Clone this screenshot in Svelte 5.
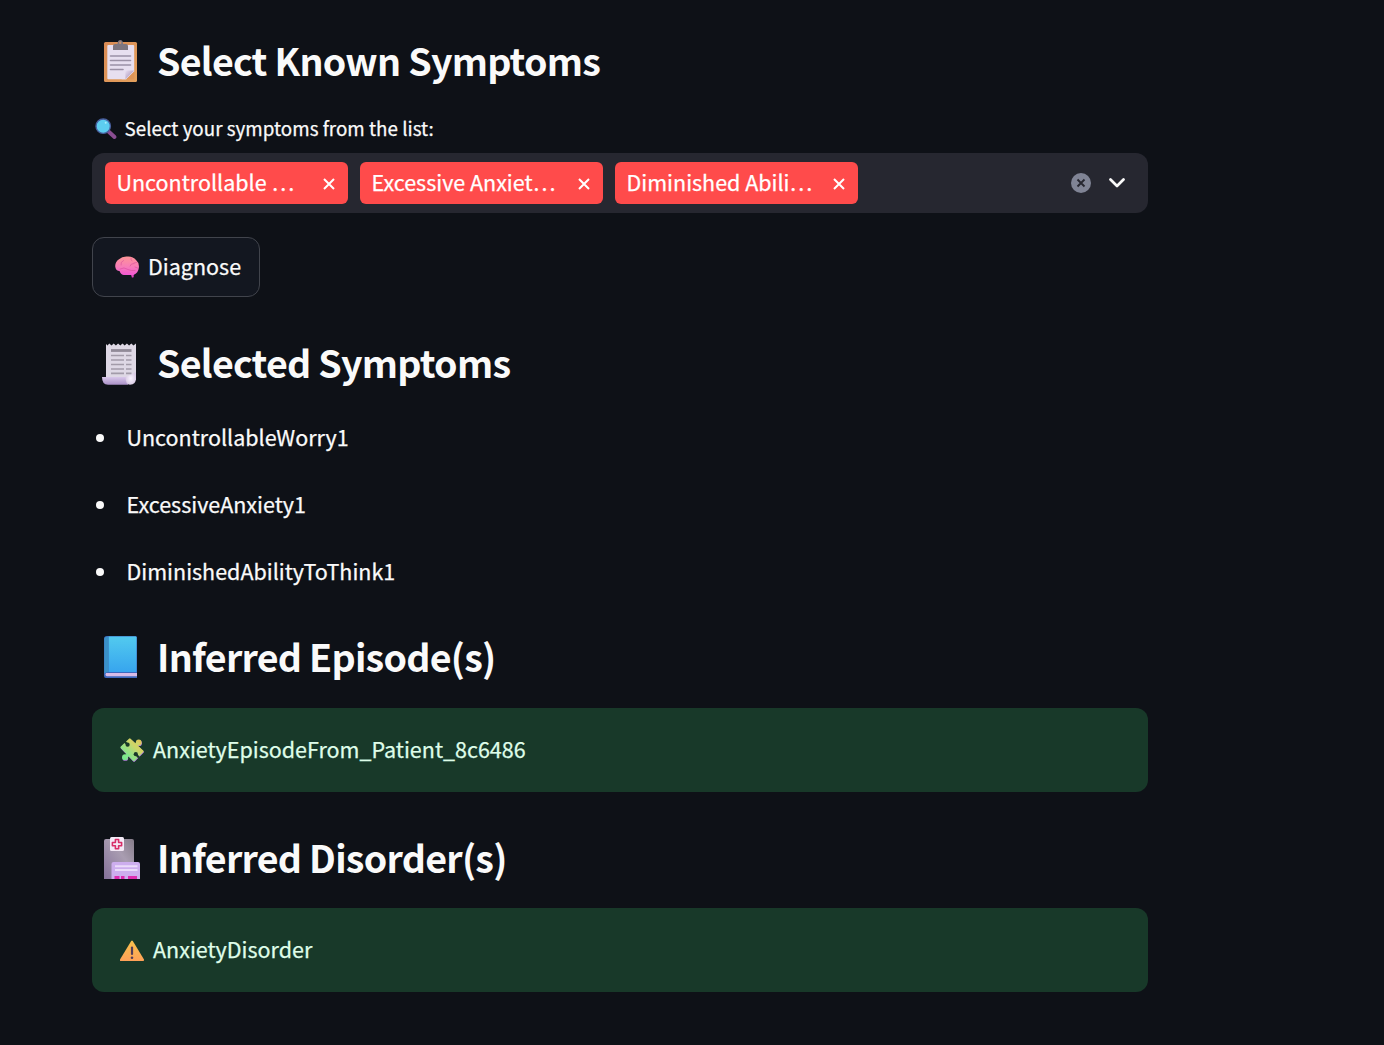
<script>
  const tags = ['Uncontrollable …', 'Excessive Anxiet…', 'Diminished Abili…'];
  const symptoms = ['UncontrollableWorry1', 'ExcessiveAnxiety1', 'DiminishedAbilityToThink1'];
</script>

<main>
  <h2>
    <svg viewBox="0 0 48 48">
      <defs>
        <linearGradient id="board" x1="0" x2="1" y1="0" y2="1"><stop stop-color="#d98b55" /><stop offset="1" stop-color="#e3a05c" /></linearGradient>
        <linearGradient id="fold" x1="0" x2="1" y1="0" y2="1"><stop stop-color="#e8dff2" /><stop offset=".6" stop-color="#b8a6c6" /></linearGradient>
      </defs>
      <rect x="8" y="4" width="33" height="40" rx="1.5" fill="url(#board)" />
      <path d="M12.3 7h24.9q1 0 1 1v25.500l-8 7.800H12.300q-1 0-1-1V8q0-1 1-1z" fill="#e7dff0" />
      <path d="M38.200 33.500l-8 7.800H25.500l5.500-6q.3-1.800 2-1.800z" fill="#e7dff0" />
      <path d="M38.200 32.500l-8.800 8.800V34q0-1.500 1.500-1.500z" fill="url(#fold)" />
      <path d="M38.300 33.500v7.800h-8z" fill="#dd9558" />
      <path d="M17 12V8q0-2 2-2h2.500q.2-4 2.800-4t2.800 4H30q2 0 2 2v4z" fill="#7e7680" />
      <circle cx="24.200" cy="4.800" r="1.200" fill="#c68f6d" />
      <path d="M14.500 18h20M14.500 22.500h20M14.500 27h20M14.500 31.500h12.500" stroke="#9b91a6" stroke-width="1.600" stroke-linecap="round" />
    </svg>
    <span>Select Known Symptoms</span>
  </h2>

  <div class="label">
    <svg viewBox="0 0 24 24">
      <path d="M14.500 14.500l6 5.500" stroke="#8a4d91" stroke-width="4" stroke-linecap="round" />
      <circle cx="9.200" cy="9.200" r="7.200" fill="#5dcdf0" stroke="#49609f" stroke-width="1.400" />
      <circle cx="11.700" cy="5.800" r="1" fill="#a9edfb" />
    </svg>
    <span>Select your symptoms from the list:</span>
  </div>

  <div class="select">
    {#each tags as tag}
      <div class="tag">
        <span>{tag}</span>
        <svg viewBox="0 0 12 12"><path d="M1 1l10 10M11 1L1 11" stroke="#fff" stroke-width="2" /></svg>
      </div>
    {/each}
    <div class="controls">
      <svg class="clear" viewBox="0 0 20 20">
        <circle cx="10" cy="10" r="10" fill="#808495" />
        <path d="M6.500 6.500l7 7M13.500 6.500l-7 7" stroke="#262730" stroke-width="1.900" />
      </svg>
      <svg class="chevron" viewBox="0 0 16 10"><path d="M1.500 1.500L8 8l6.500-6.500" fill="none" stroke="#fafafa" stroke-width="2.700" stroke-linecap="round" stroke-linejoin="round" /></svg>
    </div>
  </div>

  <button>
    <svg viewBox="0 0 24 24">
      <defs>
        <linearGradient id="brain" x1="0" x2="0" y1="0" y2="1"><stop stop-color="#ff9597" /><stop offset=".55" stop-color="#f77cb7" /><stop offset="1" stop-color="#f358d3" /></linearGradient>
      </defs>
      <path d="M15.500 18l1.400 4.500q1.400.3 1.800-.8V17z" fill="#df47bd" />
      <path d="M.3 12Q-.3 7 4 4.200 7 1.300 12 1.500 18 1 21 5q3.600 3 2.800 8-.5 5-5.300 7H9q-3 0-4.500-4Q1 16 .3 12z" fill="url(#brain)" />
      <path d="M5 14q4-2.500 8 .5 3 1.500 7 1M6 10q-1-3 2.500-4.500M16 3q-.5 2 1 3M15 11q1-3 4-2.500M19 8l2.500-.5M20 12l2.500 1" fill="none" stroke="#d74e99" stroke-opacity=".75" stroke-width=".8" stroke-linecap="round" />
    </svg>
    <span>Diagnose</span>
  </button>

  <h2 class="gap-h">
    <svg viewBox="0 0 48 48">
      <defs>
        <linearGradient id="roll" x1="0" x2="0" y1="0" y2="1"><stop stop-color="#d8c7ea" /><stop offset="1" stop-color="#aa91c7" /></linearGradient>
        <radialGradient id="curl"><stop stop-color="#faf4ff" /><stop offset="1" stop-color="#d9cce5" /></radialGradient>
      </defs>
      <path d="M10 4l1.500 1.500L13.300 3.400l2.200 2 2.200-2 2.200 2 2.200-2 2.200 2 2.200-2 2.200 2 2.200-2 2.200 2 2.200-2 2.200 2L40 3.400V40H10z" fill="#ded8e5" />
      <path d="M6 37h26v7.700H12q-6 0-6-7.700z" fill="url(#roll)" />
      <path d="M40 32v6q0 6.700-6 6.700-4.500 0-4.500-7.700z" fill="url(#curl)" />
      <path d="M15 10.500h20.500" stroke="#918b98" stroke-width="2.800" />
      <path d="M15 15.500h13m2 0h5.500M15 20h13m2 0h5.500M15 24.500h13m2 0h5.500M15 29h13m2 0h5.500M15 33.300h13m2 0h5.500" stroke="#a29ba9" stroke-width="1.700" />
    </svg>
    <span>Selected Symptoms</span>
  </h2>

  <ul>
    {#each symptoms as symptom}
      <li><i></i><span>{symptom}</span></li>
    {/each}
  </ul>

  <h2 class="gap-book">
    <svg viewBox="0 0 48 48">
      <defs><linearGradient id="cover" x1="0" x2="0" y1="0" y2="1"><stop stop-color="#52caef" /><stop offset="1" stop-color="#37a5ee" /></linearGradient></defs>
      <path d="M8 5q0-3 3-3h28.500q1.500 0 1.500 1.500V44H10q-2 0-2-2z" fill="#3e68be" />
      <path d="M10 39h31v3.300H11q-1.500 0-1.500-1.700z" fill="#d8bbe7" />
      <path d="M12.500 2.600h27q1 0 1 1V38h-28z" fill="url(#cover)" />
      <path d="M8.300 5q0-2.400 4.200-2.400V38q-3 0-4.200 1.500z" fill="#3a91c8" />
    </svg>
    <span>Inferred Episode(s)</span>
  </h2>
  <div class="alert">
    <svg viewBox="0 0 24 24">
      <defs>
        <linearGradient id="puzzle" gradientUnits="userSpaceOnUse" x1="3" x2="20" y1="21" y2="3"><stop stop-color="#72e98d" /><stop offset=".4" stop-color="#9be083" /><stop offset=".7" stop-color="#cfd568" /><stop offset="1" stop-color="#dfc65a" /></linearGradient>
        <mask id="notches">
          <rect width="24" height="24" fill="#fff" />
          <path d="M4.500 3.500l3 3M19 19.500l-3-3" stroke="#000" stroke-width="2.200" />
          <circle cx="7.600" cy="6.700" r="2.100" /><circle cx="15.800" cy="16.200" r="2.100" />
        </mask>
        <g id="piece">
          <path d="M.8 8.400L9 .7q.8-.8 1.600 0L23.200 12.500q.8.8 0 1.600l-8.600 8.700q-.8.8-1.600 0L.8 10q-.8-.8 0-1.600z" />
          <path d="M15 8l3.500-3.500M8.500 16.500L5 19.500" stroke-width="3.500" />
          <circle cx="18.700" cy="4.500" r="2.900" /><circle cx="5" cy="19.200" r="2.900" />
        </g>
      </defs>
      <g mask="url(#notches)">
        <use href="#piece" x=".3" y=".7" fill="#b782e0" stroke="none" />
        <use href="#piece" fill="url(#puzzle)" />
        <path d="M15 8l3.500-3.500" stroke="#cfd568" stroke-width="3.200" /><path d="M8.500 16.500L5 19.500" stroke="#7fe88b" stroke-width="3.200" />
      </g>
    </svg>
    <span>AnxietyEpisodeFrom_Patient_8c6486</span>
  </div>

  <h2 class="gap-h">
    <svg viewBox="0 0 48 48">
      <defs><linearGradient id="tower" x1="0" x2="1" y1="1" y2="0"><stop stop-color="#84719a" /><stop offset=".6" stop-color="#a99db1" /><stop offset="1" stop-color="#857c89" /></linearGradient></defs>
      <path d="M8 44V6q0-2 2-2h26q2 0 2 2v38z" fill="url(#tower)" />
      <path d="M15.500 44V29q0-2 2-2h24.500q2 0 2 2v15z" fill="#cdaeee" />
      <path d="M19 31.200h22.500M19 35h22.500" stroke="#ebdcfa" stroke-width="1.900" />
      <path d="M18.500 41h5v3h-5zM25 41h3.500v3H25zM32 41h9v3h-9z" fill="#dc2daf" />
      <rect x="14" y="2" width="14" height="14" rx="1.500" fill="#f3e9f6" />
      <path d="M19.400 4.500h3.200v3h3v3.200h-3v3h-3.200v-3h-3V7.500h3z" fill="#f3e9f6" stroke="#d82e68" stroke-width="1.600" stroke-linejoin="round" />
    </svg>
    <span>Inferred Disorder(s)</span>
  </h2>
  <div class="alert last">
    <svg viewBox="0 0 24 24">
      <defs><linearGradient id="warn" x1="0" x2="0" y1="0" y2="1"><stop stop-color="#f8c14c" /><stop offset="1" stop-color="#ffa158" /></linearGradient></defs>
      <path d="M11.200 3q.8-1.200 1.600 0L24 21.500q.4 1.500-.8 1.500H.8q-1.200 0-.8-1.500z" fill="url(#warn)" />
      <path d="M12 9.500v6.500" stroke="#533c57" stroke-width="2.200" stroke-linecap="round" /><circle cx="12" cy="19.700" r="1.300" fill="#533c57" />
    </svg>
    <span>AnxietyDisorder</span>
  </div>
</main>

<style>
  :global(body) { background: #0e1117; }
  main {
    box-sizing: border-box;
    width: 1148px;
    height: 1045px;
    padding: 32px 0 0 92px;
    color: #fafafa;
    font-family: "Noto Sans CJK SC", sans-serif;
    font-size: 21.5px;
    line-height: 30px;
    overflow: hidden;
  }
  svg { display: block; flex: none; }
  span {
    padding-bottom: 2px;
    white-space: nowrap;
    -webkit-text-stroke: 0.25px currentColor;
  }
  h2 {
    display: flex;
    align-items: center;
    height: 60px;
    margin: 0;
    padding-left: 4px;
    font-size: 37.6px;
    font-weight: 700;
    line-height: 56px;
    letter-spacing: -0.74px;
  }
  h2 span { padding-bottom: 4px; -webkit-text-stroke: 0; }
  h2 svg { width: 48px; height: 48px; margin-right: 13px; }
  .gap-h { margin-top: 37px; }
  .gap-book { margin-top: 23px; }
  .label {
    display: flex;
    align-items: center;
    height: 36px;
    margin-top: 19px;
    padding-left: 2px;
    font-size: 18.8px;
    letter-spacing: 0.02px;
  }
  .label svg { width: 24px; height: 24px; margin-right: 6.500px; }
  .select {
    display: flex;
    align-items: center;
    gap: 12px;
    box-sizing: border-box;
    height: 60px;
    margin-top: 6px;
    padding: 0 23px 0 13px;
    border-radius: 12px;
    background: #262730;
  }
  .tag {
    display: flex;
    align-items: center;
    justify-content: space-between;
    box-sizing: border-box;
    width: 243px;
    height: 42px;
    padding: 0 13px 0 11.500px;
    border-radius: 6px;
    background: #ff4b4b;
    color: #fff;
  }
  .tag svg { width: 12px; height: 12px; margin-top: 2px; }
  .controls { display: flex; align-items: center; gap: 18px; margin-left: auto; }
  .clear { width: 20px; height: 20px; }
  .chevron { width: 16px; height: 10px; }
  button {
    display: flex;
    align-items: center;
    box-sizing: border-box;
    width: 168px;
    height: 60px;
    margin-top: 24px;
    padding: 0 0 0 22px;
    border: 1px solid #41444c;
    border-radius: 12px;
    background: #131720;
    color: #fafafa;
    font: inherit;
  }
  button svg { width: 24px; height: 24px; margin-right: 9px; }
  ul { list-style: none; margin: 10px 0 0; padding: 0; }
  li { display: flex; align-items: center; height: 67px; }
  li i { width: 8px; height: 8px; margin: 0 22.500px 0 4px; border-radius: 50%; background: #fafafa; }
  .alert {
    display: flex;
    align-items: center;
    height: 84px;
    margin-top: 20px;
    padding-left: 28px;
    border-radius: 12px;
    background: #183929;
    color: #dffde9;
  }
  .alert svg { width: 24px; height: 24px; margin-right: 9px; }
  .last { margin-top: 19px; }
</style>
